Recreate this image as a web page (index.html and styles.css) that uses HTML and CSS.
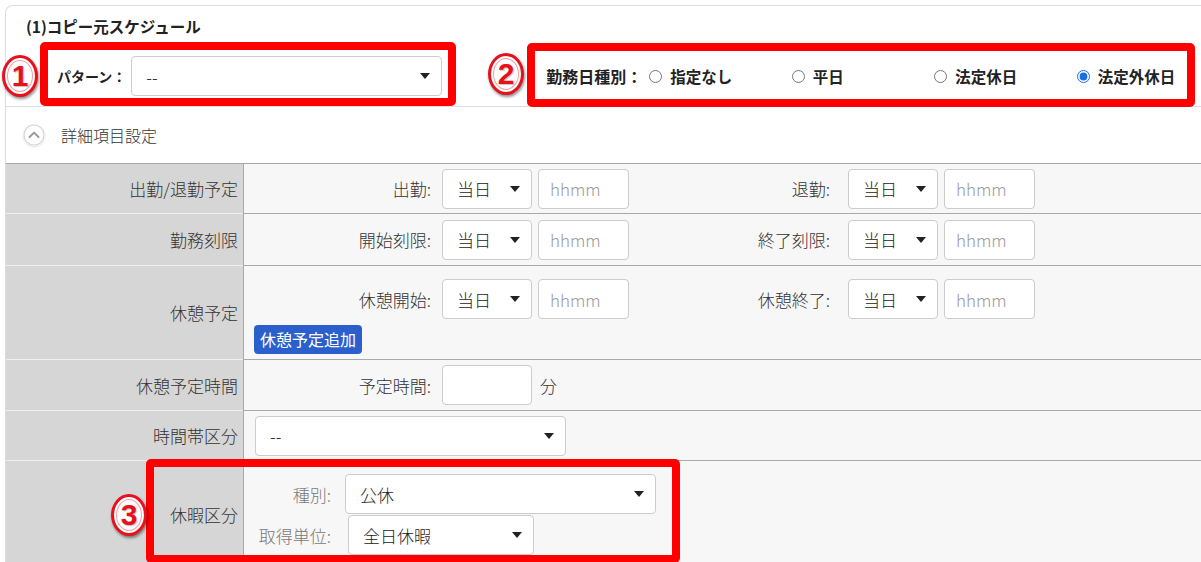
FILE: index.html
```html
<!DOCTYPE html>
<html>
  <head>
    <title>コピー元スケジュール</title>
    <link rel="stylesheet" href="styles.css">
  </head>

  <body>
    <div class="page">
      <div class="card">
        <div class="card-title">(1)コピー元スケジュール</div>

        <div class="filters">
          <div class="pattern">
            <span class="filter-label">パターン：</span>
            <div class="sel sel-pattern">--</div>
          </div>
          <div class="daytype">
            <span class="filter-label daytype-label">勤務日種別：</span>
            <label class="radio"><input type="radio" name="daytype" /> 指定なし</label>
            <label class="radio"><input type="radio" name="daytype" /> 平日</label>
            <label class="radio"><input type="radio" name="daytype" /> 法定休日</label>
            <label class="radio"><input type="radio" name="daytype" checked /> 法定外休日</label>
          </div>
        </div>

        <div class="toggle">
          <span class="toggle-icon">
            <svg width="22" height="22" viewBox="0 0 22 22">
              <circle cx="11" cy="11" r="10" fill="#fff" stroke="#d4d4d4" stroke-width="1.2" />
              <path d="M6.5 13 L11 8.6 L15.5 13" fill="none" stroke="#9a9a9a" stroke-width="2" stroke-linecap="round" stroke-linejoin="round" />
            </svg>
          </span>
          <span>詳細項目設定</span>
        </div>

        <div class="detail">
          <div class="th">出勤/退勤予定</div>
          <div class="td td-first">
            <span class="f-label">出勤:</span>
            <div class="sel sel-day">当日</div>
            <input class="inp" placeholder="hhmm" />
            <span class="f-label f-label-2">退勤:</span>
            <div class="sel sel-day">当日</div>
            <input class="inp" placeholder="hhmm" />
          </div>

          <div class="th">勤務刻限</div>
          <div class="td td-tall">
            <span class="f-label">開始刻限:</span>
            <div class="sel sel-day">当日</div>
            <input class="inp" placeholder="hhmm" />
            <span class="f-label f-label-2">終了刻限:</span>
            <div class="sel sel-day">当日</div>
            <input class="inp" placeholder="hhmm" />
          </div>

          <div class="th">休憩予定</div>
          <div class="td td-stack">
            <div class="line">
              <span class="f-label">休憩開始:</span>
              <div class="sel sel-day">当日</div>
              <input class="inp" placeholder="hhmm" />
              <span class="f-label f-label-2">休憩終了:</span>
              <div class="sel sel-day">当日</div>
              <input class="inp" placeholder="hhmm" />
            </div>
            <span class="btn-add">休憩予定追加</span>
          </div>

          <div class="th">休憩予定時間</div>
          <div class="td">
            <span class="f-label">予定時間:</span>
            <input class="inp inp-min" />
            <span class="unit">分</span>
          </div>

          <div class="th">時間帯区分</div>
          <div class="td td-first">
            <div class="sel sel-long">--</div>
          </div>

          <div class="th">休暇区分</div>
          <div class="td td-stack td-leave">
            <div class="line">
              <span class="leave-label">種別:</span>
              <div class="sel sel-long">公休</div>
            </div>
            <div class="line">
              <span class="leave-label leave-label-2">取得単位:</span>
              <div class="sel sel-unit">全日休暇</div>
            </div>
          </div>
        </div>
      </div>

      <!-- annotation marks -->
      <div class="mark mark-1"></div>
      <div class="mark mark-2"></div>
      <div class="mark mark-3"></div>
      <span class="badge badge-1">1</span>
      <span class="badge badge-2">2</span>
      <span class="badge badge-3">3</span>
    </div>
  </body>
</html>
```

FILE: styles.css
```css
* {
  box-sizing: border-box;
}

body {
  margin: 0;
  background: #fff;
  color: #333;
  font-family: "Noto Sans CJK JP", "Noto Sans", sans-serif;
  font-weight: 300;
}

.page {
  position: relative;
  width: 1201px;
  height: 562px;
  overflow: hidden;
}

.card {
  margin: 5px 0 0 5px;
  width: 1230px;
  border: 1px solid #ddd;
  border-right: none;
  border-radius: 8px 0 0 0;
}

.card-title {
  height: 36px;
  padding: 4px 0 0 20px;
  line-height: 32px;
  font-size: 15.5px;
  font-weight: 700;
  color: #222;
}

.filters {
  display: flex;
  align-items: center;
  height: 65px;
  padding: 4px 0 0 51px;
  border-bottom: 1px solid #ddd;
}

.pattern {
  display: flex;
  align-items: center;
}

.filter-label {
  font-size: 14px;
  font-weight: 700;
  color: #222;
  margin-right: 5px;
}

.daytype {
  display: flex;
  align-items: center;
  margin-left: 104px;
}

.daytype-label {
  width: 103px;
  margin-right: 0;
  font-size: 16px;
}

.radio {
  display: flex;
  align-items: center;
  width: 142.5px;
  gap: 8px;
  font-size: 15.5px;
  font-weight: 700;
  color: #222;
}

.radio input {
  margin: 0;
  width: 13px;
  height: 13px;
  accent-color: #1a6fe6;
}

.toggle {
  display: flex;
  align-items: center;
  gap: 16px;
  height: 56px;
  padding-left: 17px;
  font-size: 16px;
  color: #333;
}

.toggle-icon {
  display: flex;
  border-radius: 50%;
  box-shadow: 0 1px 2px rgba(0, 0, 0, 0.12);
}

.detail {
  display: grid;
  grid-template-columns: 237px 1fr;
  border-top: 1px solid #a9a9a9;
}

.th {
  display: flex;
  align-items: center;
  justify-content: flex-end;
  padding-right: 5px;
  background: #d6d6d6;
  border-bottom: 1px solid #f0f0f0;
  font-size: 17px;
  color: #333;
}

.td {
  display: flex;
  align-items: center;
  min-height: 51px;
  padding: 0 11px;
  background: #f7f7f7;
  border-left: 1px solid #a9a9a9;
  border-bottom: 1px solid #a9a9a9;
}

.td-first {
  min-height: 50px;
}

.td-tall {
  min-height: 52px;
}

.td-stack {
  flex-direction: column;
  align-items: flex-start;
  padding-top: 13px;
  padding-bottom: 5px;
  gap: 6px;
}

.td-leave {
  gap: 1px;
  padding-bottom: 13px;
}

.line {
  display: flex;
  align-items: center;
}

.f-label {
  width: 176px;
  margin-right: 11px;
  text-align: right;
  font-size: 17px;
  color: #333;
}

.f-label-2 {
  width: 201px;
  margin-right: 18px;
}

.sel {
  position: relative;
  display: flex;
  align-items: center;
  height: 40px;
  padding-left: 14px;
  background: #fff;
  border: 1px solid #ccc;
  border-radius: 4px;
  font-size: 17px;
  color: #222;
}

.sel::after {
  content: "";
  position: absolute;
  right: 11px;
  top: 50%;
  margin-top: -3px;
  border-left: 5px solid transparent;
  border-right: 5px solid transparent;
  border-top: 6px solid #222;
}

.sel-pattern {
  width: 311px;
}

.sel-day {
  width: 90px;
}

.sel-long {
  width: 311px;
}

.sel-unit {
  width: 186px;
}

.inp {
  width: 91px;
  height: 40px;
  margin-left: 6px;
  padding-left: 11px;
  background: #fff;
  border: 1px solid #ccc;
  border-radius: 4px;
  font-family: inherit;
  font-weight: 300;
  font-size: 17px;
  color: #333;
}

.inp::placeholder {
  color: #9a9a9a;
}

.inp-min {
  width: 90px;
  margin-left: 0;
}

.unit {
  margin-left: 8px;
  font-size: 17px;
}

.btn-add {
  height: 29px;
  margin-left: -1px;
  padding: 0 6px;
  line-height: 29px;
  background: #2b5fcb;
  color: #fff;
  border-radius: 4px;
  font-size: 16px;
  font-weight: 400;
}

.leave-label {
  width: 90px;
  padding-right: 14px;
  text-align: right;
  font-size: 17px;
  color: #777;
}

.leave-label-2 {
  width: 93px;
  padding-right: 17px;
}

/* annotation overlay */
.mark {
  position: absolute;
  border: 8px solid #ff0000;
  border-radius: 5px;
}

.mark-1 {
  left: 40px;
  top: 42px;
  width: 416px;
  height: 64px;
}

.mark-2 {
  left: 527px;
  top: 43px;
  width: 668px;
  height: 64px;
}

.mark-3 {
  left: 146px;
  top: 459px;
  width: 534px;
  height: 104px;
}

.badge {
  position: absolute;
  display: flex;
  align-items: center;
  justify-content: center;
  width: 36px;
  height: 42px;
  background: #fff;
  border: 3px solid #e8101c;
  border-radius: 50%;
  box-shadow: inset 0 0 0 2px #fff, inset 0 0 0 3px #f3a0a4, 1px 2px 3px rgba(0, 0, 0, 0.45);
  color: #e8101c;
  font-family: "Liberation Sans", sans-serif;
  font-size: 30px;
  font-weight: 700;
  text-shadow: 1px 1px 1px rgba(0, 0, 0, 0.25);
}

.badge-1 {
  left: 2px;
  top: 55px;
}

.badge-2 {
  left: 488px;
  top: 53px;
}

.badge-3 {
  left: 111px;
  top: 494px;
}
```
